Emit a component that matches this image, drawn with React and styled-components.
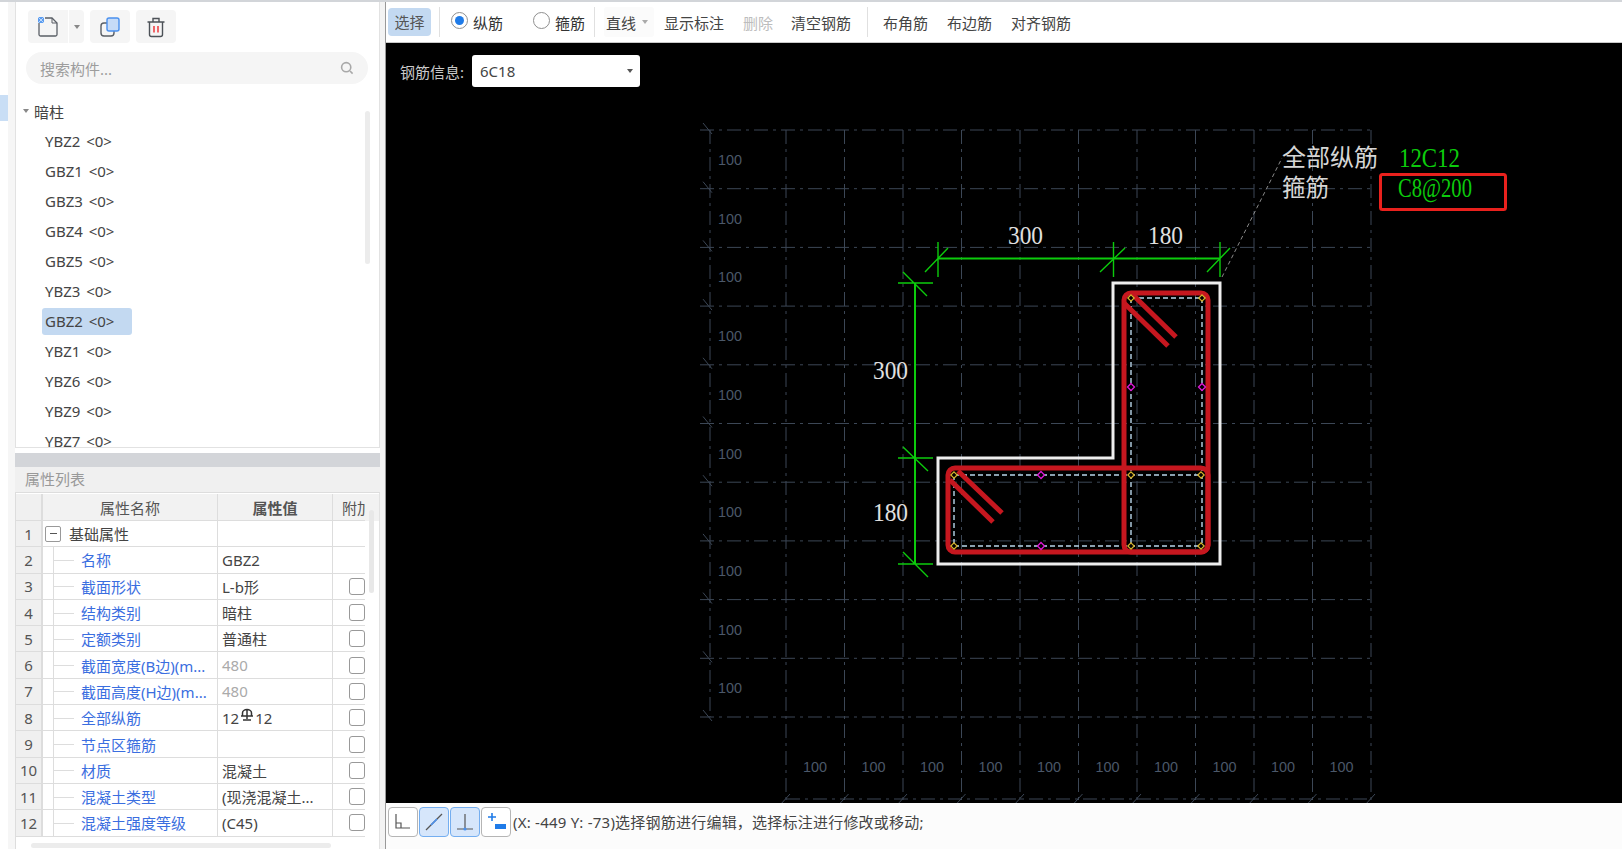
import React from 'react'
import styled, { createGlobalStyle } from 'styled-components'

const GRID = '#3c4756'
const GREEN = '#0ccb0c'
const RED = '#c6171f'

const treeItems = ['YBZ2', 'GBZ1', 'GBZ3', 'GBZ4', 'GBZ5', 'YBZ3', 'GBZ2', 'YBZ1', 'YBZ6', 'YBZ9', 'YBZ7']

const rows = [
  { name: '基础属性', group: true },
  { name: '名称', value: 'GBZ2' },
  { name: '截面形状', value: 'L-b形', check: true },
  { name: '结构类别', value: '暗柱', check: true },
  { name: '定额类别', value: '普通柱', check: true },
  { name: '截面宽度(B边)(m...', value: '480', muted: true, check: true },
  { name: '截面高度(H边)(m...', value: '480', muted: true, check: true },
  { name: '全部纵筋', rebar: true, check: true },
  { name: '节点区箍筋', value: '', check: true },
  { name: '材质', value: '混凝土', check: true },
  { name: '混凝土类型', value: '(现浇混凝土...', check: true },
  { name: '混凝土强度等级', value: '(C45)', check: true },
]

const hLines = Array.from({ length: 11 }, (_, i) => 130 + 58.7 * i)
const vLines = Array.from({ length: 11 }, (_, i) => 786 + 58.5 * i)
const yellowPts = [[954, 475], [1131, 475], [1201, 475], [954, 546], [1131, 546], [1201, 546], [1131, 298], [1202, 298]]
const pinkPts = [[1041, 475], [1041, 546], [1131, 387], [1202, 387]]

const GlobalStyle = createGlobalStyle`
  html, body {
    margin: 0;
    padding: 0;
    background: #fff;
    overflow: hidden;
  }
  * { box-sizing: border-box; }
`

const Page = styled.div`
  display: flex;
  width: 1622px;
  height: 849px;
  border-top: 2px solid #d2d5d9;
  font-family: "Noto Sans", "Noto Sans CJK SC", sans-serif;
  font-size: 15px;
  color: #444;
  overflow: hidden;
`

const SideStrip = styled.div`
  width: 15px;
  flex: none;
  background: #f6f6f6;
  border-left: 8px solid #fff;
`

const StripMark = styled.div`
  width: 8px;
  height: 26px;
  margin: 93px 0 0 -8px;
  background: #c9def5;
`

const LeftPanel = styled.div`
  width: 365px;
  flex: none;
  display: flex;
  flex-direction: column;
`

const Gutter = styled.div`
  width: 6px;
  flex: none;
  background: #f3f3f3;
  border-right: 1px solid #999;
`

const TreeBox = styled.div`
  position: relative;
  height: 446px;
  flex: none;
  background: #fff;
  border: 1px solid #e2e2e2;
  border-top: 0;
  overflow: hidden;
`

const IconBar = styled.div`
  display: flex;
  padding: 8px 0 0 12px;
  gap: 6px;
`

const IconButton = styled.div`
  display: flex;
  align-items: center;
  justify-content: center;
  width: ${p => p.$w || 40}px;
  height: 33px;
  background: #f5f5f5;
  border-radius: ${p => p.$radius || '4px'};
`

const SplitButton = styled.div`
  display: flex;
  gap: 1px;
`

const SearchBox = styled.div`
  display: flex;
  align-items: center;
  justify-content: space-between;
  height: 32px;
  margin: 9px 11px 0 10px;
  padding: 0 14px 0 14px;
  background: #f5f5f5;
  border-radius: 16px;
  color: #9d9d9d;
`

const TreeHead = styled.div`
  display: flex;
  align-items: center;
  height: 30px;
  margin-top: 12px;
  padding-left: 7px;
  gap: 5px;
  color: #444;
`

const TreeRow = styled.div`
  display: flex;
  align-items: center;
  height: 30px;
  padding-left: 26px;
`

const TreeItem = styled.div`
  width: 90px;
  height: 27px;
  line-height: 27px;
  padding-left: 3px;
  border-radius: 3px;
  white-space: pre;
  word-spacing: -1px;
  background: ${p => (p.$active ? '#c3d9f1' : 'transparent')};
`

const ListScroll = styled.div`
  position: absolute;
  right: 9px;
  top: 109px;
  width: 5px;
  height: 153px;
  background: #ececec;
  border-radius: 3px;
`

const DragBar = styled.div`
  height: 14px;
  margin-top: 5px;
  flex: none;
  background: #d3d5d9;
`

const PanelTitle = styled.div`
  height: 26px;
  line-height: 25px;
  flex: none;
  padding-left: 10px;
  background: #f0f0f0;
  border-bottom: 1px solid #ddd;
  color: #999;
`

const TableWrap = styled.div`
  position: relative;
  flex: 1;
  padding-top: 1px;
  background: #fff;
  border-left: 1px solid #ddd;
  border-right: 1px solid #e2e2e2;
  overflow: hidden;
`

const Row = styled.div`
  display: grid;
  grid-template-columns: 27px 175px 115px 32px;
  height: ${p => (p.$head ? 27 : 26.3)}px;
  background: ${p => (p.$head ? '#f2f2f2' : '#fff')};
`

const Cell = styled.div`
  display: flex;
  align-items: center;
  min-width: 0;
  padding-left: ${p => p.$pad || 0}px;
  justify-content: ${p => (p.$center ? 'center' : 'flex-start')};
  border-right: 1px solid #ddd;
  border-bottom: 1px solid #ddd;
  color: ${p => p.$color || '#444'};
  font-weight: ${p => (p.$bold ? 600 : 400)};
  white-space: nowrap;
  overflow: hidden;
`

const IndexCell = styled(Cell)`
  background: #f0f0f0;
  border-right: 2px solid #ddd;
  color: #555;
`

const LastCell = styled(Cell)`
  border-right: 0;
`

const NameCell = styled(Cell)`
  position: relative;
  color: #3a6ee0;
  padding-left: 38px;
`

const TreeLine = styled.span`
  position: absolute;
  left: 10px;
  top: 0;
  bottom: 0;
  width: 21px;
  border-left: 1px solid #ddd;
  &::after {
    content: '';
    position: absolute;
    left: 0;
    right: 0;
    top: 50%;
    border-top: 1px solid #ddd;
  }
`

const Collapse = styled.span`
  display: inline-flex;
  align-items: center;
  justify-content: center;
  width: 16px;
  height: 16px;
  margin: 0 8px 0 2px;
  border: 1px solid #999;
  border-radius: 2px;
  line-height: 1;
  &::before {
    content: '';
    width: 7px;
    border-top: 1px solid #555;
  }
`

const Check = styled.span`
  flex: none;
  width: 16px;
  height: 17px;
  border: 1px solid #999;
  border-radius: 3px;
  background: #fff;
`

const TableScrollV = styled.div`
  position: absolute;
  right: 5px;
  top: 17px;
  width: 5px;
  height: 83px;
  background: #e8e8e8;
  border-radius: 3px;
`

const TableScrollH = styled.div`
  position: absolute;
  left: 15px;
  bottom: 1px;
  width: 300px;
  height: 5px;
  background: #ececec;
  border-radius: 3px;
`

const Main = styled.div`
  flex: 1;
  min-width: 0;
  display: flex;
  flex-direction: column;
`

const Toolbar = styled.div`
  display: flex;
  align-items: center;
  height: 41px;
  flex: none;
  padding-left: 2px;
  border-bottom: 1px solid #c9c9c9;
  background: #fff;
`

const ActiveTool = styled.div`
  width: 43px;
  height: 28px;
  line-height: 28px;
  text-align: center;
  background: #c3d9f1;
  border-radius: 4px;
  color: #555;
`

const Sep = styled.div`
  width: 1px;
  height: 30px;
  margin-left: ${p => p.$ml}px;
  background: #e0e0e0;
`

const Radio = styled.label`
  display: flex;
  align-items: center;
  gap: 5px;
  margin-left: ${p => p.$ml}px;
  color: #333;
`

const RadioDot = styled.span`
  display: flex;
  align-items: center;
  justify-content: center;
  width: 17px;
  height: 17px;
  border: 1px solid #8f8f8f;
  border-radius: 50%;
  margin-top: -3px;
  &::after {
    content: '';
    width: 9px;
    height: 9px;
    border-radius: 50%;
    background: ${p => (p.$on ? '#1f7be8' : 'transparent')};
  }
`

const LineSelect = styled.div`
  display: flex;
  align-items: center;
  gap: 6px;
  width: 50px;
  height: 30px;
  margin-left: 9px;
  padding-left: 2px;
  background: #fbfbfb;
  border-radius: 3px;
`

const Caret = styled.span`
  width: 0;
  height: 0;
  flex: none;
  border-left: 3px solid transparent;
  border-right: 3px solid transparent;
  border-top: 4px solid ${p => p.$color || '#888'};
`

const Tool = styled.div`
  margin-left: ${p => p.$ml}px;
  color: ${p => (p.$disabled ? '#bdbdbd' : '#444')};
  white-space: nowrap;
`

const Canvas = styled.div`
  position: relative;
  flex: none;
  height: 760px;
  background: #000;
  overflow: hidden;
`

const Drawing = styled.svg`
  position: absolute;
  left: 0;
  top: 0;
  width: 1236px;
  height: 760px;
`

const InfoRow = styled.div`
  position: relative;
  display: flex;
  align-items: center;
  gap: 8px;
  padding: 12px 0 0 14px;
  color: #c9c9c9;
`

const InfoSelect = styled.div`
  display: flex;
  align-items: center;
  justify-content: space-between;
  width: 168px;
  height: 32px;
  padding: 0 7px 0 8px;
  background: #fff;
  border-radius: 3px;
  color: #444;
`

const StatusBar = styled.div`
  flex: 1;
  display: flex;
  align-items: flex-start;
  padding: 4px 0 0 2px;
  background: #fcfcfc;
  color: #444;
`

const SnapGroup = styled.div`
  display: flex;
  gap: 1px;
  margin-right: 2px;
`

const SnapButton = styled.div`
  display: flex;
  align-items: center;
  justify-content: center;
  width: 30px;
  height: 30px;
  border: 1px solid ${p => (p.$on ? '#74aef0' : '#b5b5b5')};
  border-radius: 4px;
  background: ${p => (p.$on ? '#d6e6fb' : '#fff')};
`

const StatusText = styled.div`
  line-height: 30px;
  letter-spacing: 0.22px;
  white-space: nowrap;
`

const RebarMark = styled.svg`
  width: 14px;
  height: 14px;
  margin: -5px 1px 0;
`

function FileIcon() {
  return (
    <svg width="22" height="22" viewBox="0 0 22 22" fill="none">
      <path d="M2 6v12.5a1.5 1.5 0 0 0 1.5 1.5h15a1.5 1.5 0 0 0 1.5-1.5V7l-5-5H8" stroke="#5a5f66" strokeWidth="1.3" />
      <path d="M15 2v5h5" stroke="#5a5f66" strokeWidth="1" />
      <rect x="1" y="1" width="6" height="6" fill="#5b9cf0" />
      <path d="M1 1l6 6M7 1l-6 6" stroke="#d8e8fb" strokeWidth="0.8" />
    </svg>
  )
}

function CopyIcon() {
  return (
    <svg width="22" height="22" viewBox="0 0 22 22" fill="none">
      <rect x="2" y="7" width="13" height="13" rx="3" stroke="#5a5f66" strokeWidth="1.4" />
      <rect x="8" y="2" width="12" height="13" rx="2" fill="#c6dbf7" stroke="#4a90ee" strokeWidth="1.4" />
    </svg>
  )
}

function TrashIcon() {
  return (
    <svg width="20" height="22" viewBox="0 0 20 22" fill="none">
      <path d="M1.5 6h17M7 5.5V2.5h6v3" stroke="#4c5157" strokeWidth="1.4" />
      <path d="M3.5 6v12.5a2 2 0 0 0 2 2h9a2 2 0 0 0 2-2V6" stroke="#4c5157" strokeWidth="1.4" />
      <path d="M8 10v6.5M12 10v6.5" stroke="#ee2b30" strokeWidth="1.4" />
    </svg>
  )
}

function SearchIcon() {
  return (
    <svg width="14" height="14" viewBox="0 0 14 14" fill="none">
      <circle cx="6.2" cy="6.2" r="4.6" stroke="#a8a8a8" strokeWidth="1.6" />
      <path d="M10 10l2.6 2.6" stroke="#a8a8a8" strokeWidth="1.6" />
    </svg>
  )
}

function RebarGlyph() {
  return (
    <RebarMark viewBox="0 0 14 14" fill="none" stroke="#333" strokeWidth="1.5">
      <path d="M2.5 8V5a4.5 3.4 0 0 1 9 0v3M7 1v10M1 8h12M3 12h8" />
    </RebarMark>
  )
}

function Grid() {
  return (
    <g stroke={GRID} strokeWidth="1" fill="none">
      <g strokeDasharray="14 5 3 5">
        {hLines.map(y => <line key={y} x1="700" y1={y} x2="1371" y2={y} />)}
        <line x1="786" y1="799" x2="1371" y2="799" />
        <line x1="710" y1="130" x2="710" y2="717" />
        {vLines.map(x => <line key={x} x1={x} y1="130" x2={x} y2="803" />)}
      </g>
      {hLines.map(y => <line key={y} x1="703" y1={y - 7} x2="712" y2={y + 4} />)}
      {vLines.map(x => <line key={x} x1={x - 6} y1="805" x2={x + 4} y2="794" />)}
    </g>
  )
}

function GridLabels() {
  const style = { fontFamily: '"Liberation Sans", sans-serif', fontSize: 15, fill: '#4b5869' }
  return (
    <g style={style}>
      {hLines.slice(0, 10).map(y => (
        <text key={y} x="718" y={y + 35} textLength="24" lengthAdjust="spacingAndGlyphs">100</text>
      ))}
      {vLines.slice(0, 10).map(x => (
        <text key={x} x={x + 17} y="772" textLength="24" lengthAdjust="spacingAndGlyphs">100</text>
      ))}
    </g>
  )
}

function Dimensions() {
  const style = { fontFamily: '"Liberation Serif", serif', fontSize: 25, fill: '#e0e0e0' }
  return (
    <g>
      <g stroke={GREEN} strokeWidth="1.4" fill="none">
        <path d="M938 258.5H1220" strokeWidth="2" />
        <path d="M938 242V277M948 248L925 272M1113.5 242V277M1125 248L1100 272M1220 242V277M1230 248L1207 272" />
        <path d="M915 283V564" strokeWidth="2" />
        <path d="M898 283H933M903 272L927 296M898 458H933M903 447L928 471M898 564H933M903 552L928 577" />
      </g>
      <g style={style}>
        <text x="1008" y="244" textLength="35" lengthAdjust="spacingAndGlyphs">300</text>
        <text x="1148" y="244" textLength="35" lengthAdjust="spacingAndGlyphs">180</text>
        <text x="873" y="379" textLength="35" lengthAdjust="spacingAndGlyphs">300</text>
        <text x="873" y="521" textLength="35" lengthAdjust="spacingAndGlyphs">180</text>
      </g>
    </g>
  )
}

function Section() {
  return (
    <g fill="none">
      <path d="M938 458H1113V283H1220V564H938Z" stroke="#eeeeee" strokeWidth="3" />
      <g stroke="#b9d6ea" strokeWidth="1.4" strokeDasharray="5 3">
        <path d="M954 475H1201M954 546H1201M954 475V546M1131 298V546M1202 298V546M1131 298H1202" />
      </g>
      <g stroke={RED} strokeWidth="5">
        <rect x="948" y="468" width="260" height="84" rx="7" />
        <rect x="1124" y="293" width="84" height="259" rx="7" />
        <path d="M950 480L993 522M958 471L1002 513M1124 303L1168 346M1133 295L1176 337" />
      </g>
      {yellowPts.map(([x, y]) => (
        <path key={`${x}-${y}`} d={`M${x} ${y - 3.2}L${x + 3.2} ${y}L${x} ${y + 3.2}L${x - 3.2} ${y}Z`} fill="#000" stroke="#d9b52c" strokeWidth="1.2" />
      ))}
      {pinkPts.map(([x, y]) => (
        <path key={`${x}-${y}`} d={`M${x} ${y - 3.5}L${x + 3.5} ${y}L${x} ${y + 3.5}L${x - 3.5} ${y}Z`} fill="#000" stroke="#e018d8" strokeWidth="1.3" />
      ))}
    </g>
  )
}

function Legend() {
  const cjk = { fontFamily: '"Noto Sans CJK SC", sans-serif', fontSize: 24, fill: '#d6d6d6' }
  const code = { fontFamily: '"Liberation Serif", serif', fontSize: 27, fill: '#0ccb0c' }
  return (
    <g>
      <path d="M1222 277L1282 158" stroke="#8a8a8a" strokeWidth="1" strokeDasharray="4 3" fill="none" />
      <text x="1282" y="166" style={cjk} textLength="96" lengthAdjust="spacingAndGlyphs">全部纵筋</text>
      <text x="1282" y="196" style={cjk} textLength="47" lengthAdjust="spacingAndGlyphs">箍筋</text>
      <text x="1399" y="167" style={code} textLength="61" lengthAdjust="spacingAndGlyphs">12C12</text>
      <text x="1398" y="197" style={code} textLength="74" lengthAdjust="spacingAndGlyphs">C8@200</text>
      <rect x="1380.5" y="174.5" width="125" height="35" rx="2" fill="none" stroke="#e9211d" strokeWidth="3" />
    </g>
  )
}

function SnapIcon({ kind }) {
  return (
    <svg width="22" height="22" viewBox="0 0 22 22" fill="none" stroke="#555" strokeWidth="1.2">
      {kind === 'corner' && <path d="M4 3V17H18M4 12H9V17" />}
      {kind === 'line' && (
        <>
          <path d="M3 19L19 3" />
          <path d="M8 14L14 8" stroke="#4a90ee" strokeWidth="1.6" />
        </>
      )}
      {kind === 'perp' && (
        <>
          <path d="M11 3V18M3 18H19" />
          <circle cx="11" cy="18" r="1.6" fill="#4a90ee" stroke="none" />
        </>
      )}
      {kind === 'add' && (
        <>
          <path d="M7 2V10M3 6H11" stroke="#1f7be8" strokeWidth="1.6" />
          <rect x="10" y="13" width="11" height="5" fill="#1f7be8" stroke="none" />
        </>
      )}
    </svg>
  )
}

export default function App() {
  return (
    <Page>
      <GlobalStyle />
      <SideStrip>
        <StripMark />
      </SideStrip>

      <LeftPanel>
        <TreeBox>
          <IconBar>
            <SplitButton>
              <IconButton $radius="4px 0 0 4px"><FileIcon /></IconButton>
              <IconButton $w={15} $radius="0 4px 4px 0"><Caret /></IconButton>
            </SplitButton>
            <IconButton><CopyIcon /></IconButton>
            <IconButton><TrashIcon /></IconButton>
          </IconBar>
          <SearchBox>
            搜索构件...
            <SearchIcon />
          </SearchBox>
          <TreeHead>
            <Caret />
            暗柱
          </TreeHead>
          {treeItems.map((item, i) => (
            <TreeRow key={i}>
              <TreeItem $active={i === 6}>{`${item}  <0>`}</TreeItem>
            </TreeRow>
          ))}
          <ListScroll />
        </TreeBox>

        <DragBar />
        <PanelTitle>属性列表</PanelTitle>

        <TableWrap>
          <Row $head>
            <IndexCell />
            <Cell $center $color="#555">属性名称</Cell>
            <Cell $center $bold $color="#555">属性值</Cell>
            <LastCell $pad={9} $color="#555">附加</LastCell>
          </Row>
          {rows.map((row, i) => (
            <Row key={i}>
              <IndexCell $center>{i + 1}</IndexCell>
              {row.group ? (
                <Cell>
                  <Collapse />
                  基础属性
                </Cell>
              ) : (
                <NameCell>
                  <TreeLine />
                  {row.name}
                </NameCell>
              )}
              <Cell $pad={4} $color={row.muted ? '#aaa' : '#444'}>
                {row.rebar ? <>12<RebarGlyph />12</> : row.value}
              </Cell>
              <LastCell $pad={16}>{row.check && <Check />}</LastCell>
            </Row>
          ))}
          <TableScrollV />
          <TableScrollH />
        </TableWrap>
      </LeftPanel>

      <Gutter />

      <Main>
        <Toolbar>
          <ActiveTool>选择</ActiveTool>
          <Sep $ml={8} />
          <Radio $ml={11}><RadioDot $on />纵筋</Radio>
          <Radio $ml={30}><RadioDot />箍筋</Radio>
          <Sep $ml={9} />
          <LineSelect>直线<Caret $color="#aaa" /></LineSelect>
          <Tool $ml={10}>显示标注</Tool>
          <Tool $ml={19} $disabled>删除</Tool>
          <Tool $ml={18}>清空钢筋</Tool>
          <Sep $ml={16} />
          <Tool $ml={15}>布角筋</Tool>
          <Tool $ml={19}>布边筋</Tool>
          <Tool $ml={19}>对齐钢筋</Tool>
        </Toolbar>

        <Canvas>
          <Drawing viewBox="386 43 1236 760">
            <Grid />
            <GridLabels />
            <Dimensions />
            <Section />
            <Legend />
          </Drawing>
          <InfoRow>
            钢筋信息:
            <InfoSelect>
              6C18
              <Caret $color="#555" />
            </InfoSelect>
          </InfoRow>
        </Canvas>

        <StatusBar>
          <SnapGroup>
            <SnapButton><SnapIcon kind="corner" /></SnapButton>
            <SnapButton $on><SnapIcon kind="line" /></SnapButton>
            <SnapButton $on><SnapIcon kind="perp" /></SnapButton>
            <SnapButton><SnapIcon kind="add" /></SnapButton>
          </SnapGroup>
          <StatusText>(X: -449 Y: -73)选择钢筋进行编辑，选择标注进行修改或移动;</StatusText>
        </StatusBar>
      </Main>
    </Page>
  )
}
